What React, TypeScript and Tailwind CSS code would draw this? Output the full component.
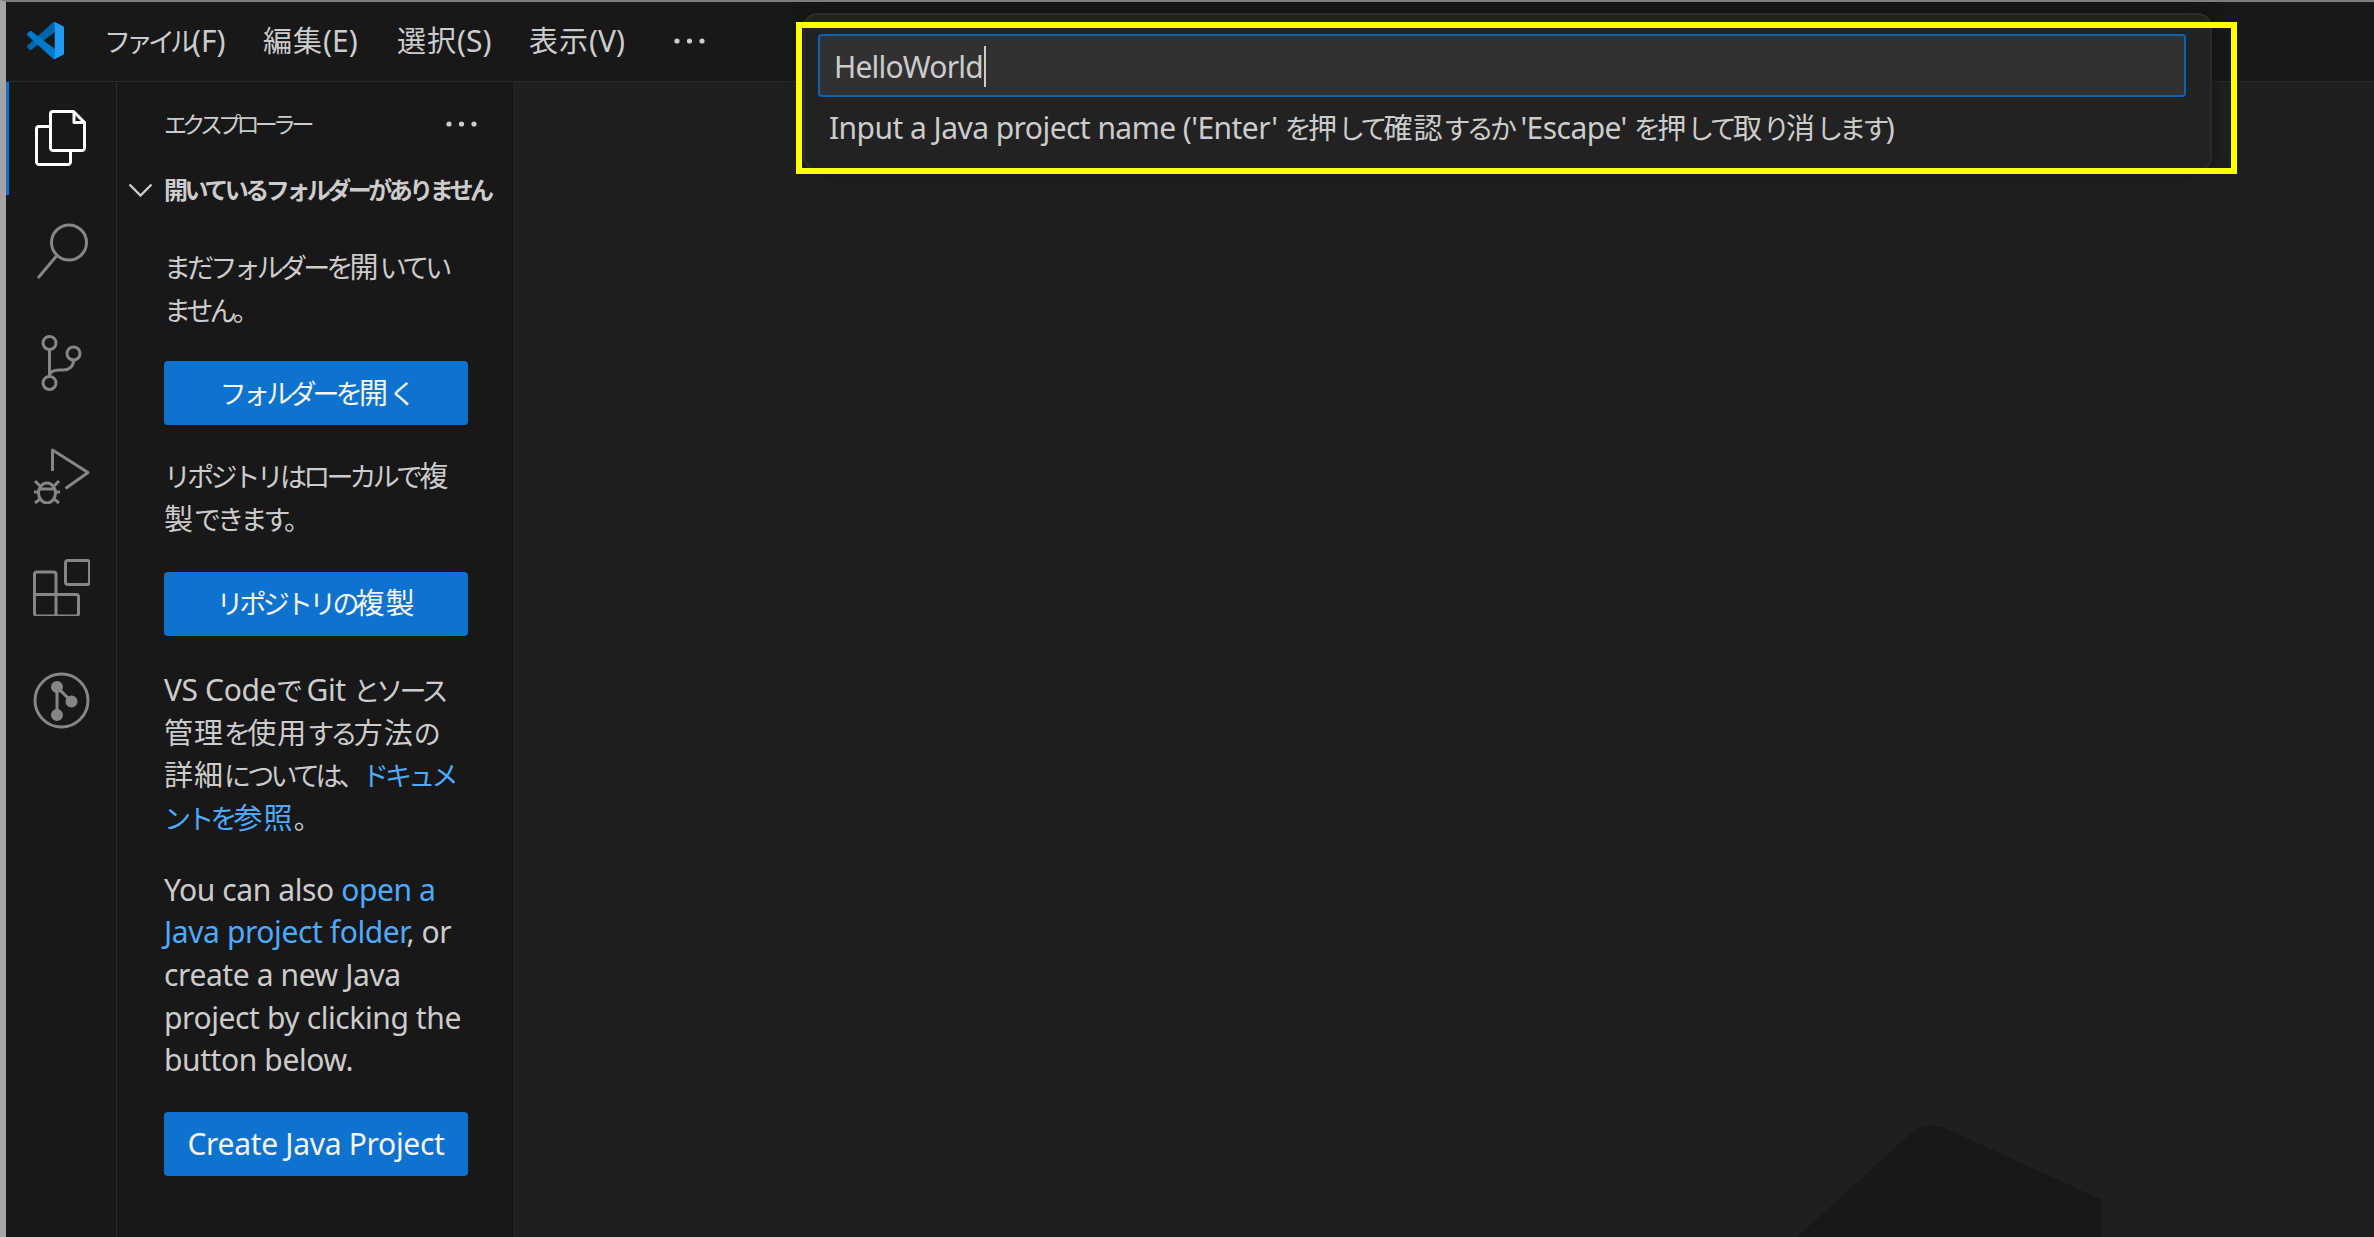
import type { ReactNode } from "react";

const uiFont = { fontFamily: '"Noto Sans", "Noto Sans CJK JP", sans-serif' };

// narrow kana like Meiryo UI
function J({ children }: { children: ReactNode }) {
  return <span className="text-[27px] leading-none tracking-[-3.8px]">{children}</span>;
}

// kanji keep their full width
function K({ children }: { children: ReactNode }) {
  return <span className="text-[29px] leading-none tracking-[1px]">{children}</span>;
}

function VsCodeLogo() {
  return (
    <svg width="37" height="37" viewBox="0 0 100 100">
      <path
        d="M96.4614 10.7962L75.8569 0.875542C73.4719 -0.272773 70.6217 0.211611 68.75 2.08333L1.29858 63.5832C-0.515693 65.2373 -0.513607 68.0937 1.30308 69.7452L6.81272 74.754C8.29793 76.1042 10.5347 76.2036 12.1338 74.9905L93.3609 13.3699C96.086 11.3026 100 13.2462 100 16.6667V16.4275C100 14.0265 98.6246 11.8378 96.4614 10.7962Z"
        fill="#0065A9"
      />
      <path
        d="M96.4614 89.2038L75.8569 99.1245C73.4719 100.273 70.6217 99.7884 68.75 97.9167L1.29858 36.4168C-0.515693 34.7627 -0.513607 31.9063 1.30308 30.2548L6.81272 25.246C8.29793 23.8958 10.5347 23.7964 12.1338 25.0095L93.3609 86.6301C96.086 88.6974 100 86.7538 100 83.3333V83.5725C100 85.9735 98.6246 88.1622 96.4614 89.2038Z"
        fill="#007ACC"
      />
      <path
        d="M75.8578 99.1263C73.4721 100.274 70.6219 99.7885 68.75 97.9166C71.0564 100.223 75 98.5895 75 95.3278V4.67213C75 1.41039 71.0564 -0.223106 68.75 2.08329C70.6219 0.211402 73.4721 -0.273666 75.8578 0.873633L96.4587 10.7807C98.6234 11.8217 100 14.0112 100 16.4132V83.5871C100 85.9891 98.6234 88.1786 96.4586 89.2196L75.8578 99.1263Z"
        fill="#1F9CF0"
      />
    </svg>
  );
}

function Dots({ color = "#cccccc" }: { color?: string }) {
  return (
    <svg width="31" height="6" viewBox="0 0 31 6">
      <circle cx="3" cy="3" r="2.6" fill={color} />
      <circle cx="15.5" cy="3" r="2.6" fill={color} />
      <circle cx="28" cy="3" r="2.6" fill={color} />
    </svg>
  );
}

function Icon({ children, color = "#868686" }: { children: ReactNode; color?: string }) {
  return (
    <svg width="57" height="57" viewBox="0 0 57 57" fill="none" stroke={color} strokeWidth="3" strokeLinejoin="round">
      {children}
    </svg>
  );
}

const activityIcons = [
  <Icon color="#ffffff">
    <path d="M20 1.5h20.5l11 11v25.5a2.5 2.5 0 0 1-2.5 2.5H20a2.5 2.5 0 0 1-2.5-2.5V4a2.5 2.5 0 0 1 2.5-2.5z" />
    <path d="M41 2v10.5h10" />
    <path d="M17.5 16.5H6a2.5 2.5 0 0 0-2.5 2.5v33a2.5 2.5 0 0 0 2.5 2.5h29a2.5 2.5 0 0 0 2.5-2.5V40.5" />
  </Icon>,
  <Icon>
    <circle cx="36" cy="20.5" r="17.5" />
    <path d="M23.5 34L5 56" />
  </Icon>,
  <Icon>
    <circle cx="16.5" cy="9" r="6.5" />
    <circle cx="40.5" cy="19.5" r="6.5" />
    <circle cx="16.5" cy="49" r="6.5" />
    <path d="M16.5 15.5v27" />
    <path d="M40.5 26c0 7-5 10-10 10h-4c-5 0-10 1-10 6" />
  </Icon>,
  <Icon>
    <path d="M19.5 24V3L55 25.5 32.5 41.5" />
    <ellipse cx="14" cy="46" rx="8.5" ry="10" />
    <path d="M6 42h16M2 34l5 5M26 34l-5 5M1 45h5M22 45h5M2 56l5-4M26 56l-5-4" />
  </Icon>,
  <Icon>
    <rect x="32.5" y="1.5" width="24" height="24" rx="2.5" />
    <path d="M23 35.5V15.5A2.5 2.5 0 0 0 20.5 13H4a2.5 2.5 0 0 0-2.5 2.5V54.5A2.5 2.5 0 0 0 4 57h39a2.5 2.5 0 0 0 2.5-2.5V38A2.5 2.5 0 0 0 43 35.5H1.5M23 35.5V57" />
  </Icon>,
  <Icon>
    <circle cx="28.5" cy="28.5" r="26.5" />
    <path d="M24 15v28M24 15l14.5 14.5" />
    <circle cx="24" cy="15" r="4.5" fill="#868686" />
    <circle cx="38.5" cy="29.5" r="4.5" fill="#868686" />
    <circle cx="24" cy="43" r="4.5" fill="#868686" />
  </Icon>,
];

function ActionButton({ children, className }: { children: ReactNode; className: string }) {
  return (
    <button className={`flex h-16 w-[304px] items-center justify-center rounded-[4px] bg-[#0e73cf] text-[30px] tracking-[-0.3px] text-[#f4f4f4] ${className}`}>
      <span>{children}</span>
    </button>
  );
}

export default function App() {
  return (
    <div
      className="relative flex h-[1237px] w-[2374px] flex-col overflow-hidden border-t-2 border-l-[6px] border-t-[#7d7d7d] border-l-[#a4a4a4] bg-[#1f1f1f] text-[#cccccc]"
      style={uiFont}
    >
      {/* title bar */}
      <div className="flex h-[80px] shrink-0 items-center border-b border-[#2b2b2b] bg-[#181818] pb-[2px] pl-[21px] text-[30px]">
        <VsCodeLogo />
        <div className="ml-[40px] w-[159px]">
          <span className="text-[27px] leading-none tracking-[-5px]">ファイル</span>(F)
        </div>
        <div className="w-[134px]"><K>編集</K>(E)</div>
        <div className="w-[132px]"><K>選択</K>(S)</div>
        <div className="w-[145px]"><K>表示</K>(V)</div>
        <Dots />
      </div>

      <div className="flex min-h-0 flex-1">
        {/* activity bar */}
        <div className="relative flex w-[111px] shrink-0 flex-col border-r border-[#2b2b2b] bg-[#181818]">
          <div className="absolute top-0 left-0 h-[113px] w-[3px] bg-[#0e73cf]" />
          {activityIcons.map((icon, i) => (
            <div key={i} className="flex h-[112.4px] items-center justify-center">
              {icon}
            </div>
          ))}
        </div>

        {/* side bar */}
        <div className="flex w-[398px] shrink-0 flex-col border-r border-[#2b2b2b] bg-[#181818]">
          <div className="flex h-[84px] items-center justify-between pr-[37px] pl-[47px]">
            <span className="text-[23px] tracking-[-4.7px]">エクスプローラー</span>
            <Dots />
          </div>
          <div className="flex h-[48px] items-center pl-[11px]">
            <svg width="25" height="14" viewBox="0 0 25 14" fill="none" stroke="#cccccc" strokeWidth="2.4">
              <path d="M1.5 1.5l11 11 11-11" />
            </svg>
            <span className="ml-[11px] text-[24px] font-bold tracking-[-3.5px] whitespace-nowrap">開いているフォルダーがありません</span>
          </div>
          <div className="flex flex-col pl-[47px] text-[30px] leading-[42.7px] tracking-[-0.4px]">
            <p className="mt-[32px]"><J>まだフォルダーを</J><K>開</K><J>いてい</J><br /><J>ません。</J></p>
            <ActionButton className="mt-[30px]"><J>フォルダーを</J><K>開</K><J>く</J></ActionButton>
            <p className="mt-[30px]"><J>リポジトリはローカルで</J><K>複</K><br /><K>製</K><J>できます。</J></p>
            <ActionButton className="mt-[31px]"><J>リポジトリの</J><K>複製</K></ActionButton>
            <p className="mt-[33px]">
              VS Code<J>で</J> Git <J>とソース</J><br />
              <K>管理</K><J>を</J><K>使用</K><J>する</J><K>方法</K><J>の</J><br />
              <K>詳細</K><J>については、</J><a className="text-[#4daafc]"><J>ドキュメ</J></a><br />
              <a className="text-[#4daafc]"><J>ントを</J><K>参照</K></a><J>。</J>
            </p>
            <p className="mt-[29px]">
              You can also <a className="text-[#4daafc]">open a</a><br />
              <a className="text-[#4daafc]">Java project folder</a>, or<br />
              create a new Java<br />
              project by clicking the<br />
              button below.
            </p>
            <ActionButton className="mt-[30px]">Create Java Project</ActionButton>
          </div>
        </div>

        {/* editor */}
        <div className="flex-1 bg-[#1f1f1f]" />
      </div>

      {/* watermark */}
      <svg className="absolute top-[1123px] left-[1785px]" width="320" height="112" viewBox="0 0 320 112" fill="#181818">
        <path d="M6 112L118 10C130 0 144-2 158 5L311 75V112Z" />
      </svg>

      {/* quick input */}
      <div className="absolute top-[11px] left-[797px] h-[158px] w-[1409px] rounded-[14px] border-2 border-[#2b2b2b] bg-[#222222] pt-[19px] pr-[24px] pl-[13px] shadow-[0_0_16px_rgba(0,0,0,0.4)]">
        <div className="flex h-[63px] items-center rounded-[4px] border-2 border-[#0f62ac] bg-[#313131] pt-[2px] pl-[14px] text-[30px] tracking-[-0.8px]">
          HelloWorld
          <span className="ml-px h-[41px] w-[2px] bg-[#cccccc]" />
        </div>
        <div className="mt-[12px] pl-[11px] text-[30px] leading-[38px] tracking-[-0.55px] whitespace-nowrap">
          Input a Java project name ('Enter' <J>を</J><K>押</K><J>して</J><K>確認</K><J>するか</J> 'Escape' <J>を</J><K>押</K><J>して</J><K>取</K><J>り</J><K>消</K><J>します</J>)
        </div>
      </div>

      {/* yellow highlight */}
      <div className="absolute top-[20px] left-[790px] h-[152px] w-[1441px] border-[6px] border-[#ffff00]" />
    </div>
  );
}
